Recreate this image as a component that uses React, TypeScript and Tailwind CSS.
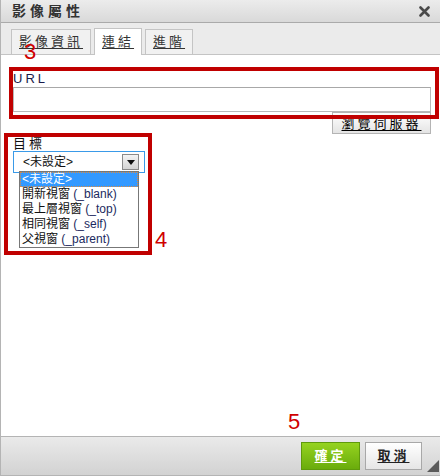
import type React from "react"

const FONT = { fontFamily: '"Liberation Sans", Arial, "Noto Sans CJK TC", sans-serif' }

function Tab({ children, active }: { children: React.ReactNode; active?: boolean }) {
    return (
        <div
            className={`flex items-center justify-center px-[7px] border border-[#c4c4c4] border-b-0 text-[13px] tracking-[3px] text-[#333] underline underline-offset-2 ${
                active ? "bg-white h-[27px] -mb-px" : "bg-[#f1f1f1] h-[25px]"
            }`}
        >
            {children}
        </div>
    )
}

export default function App() {
    const options = [
        { zh: "開新視窗", en: "(_blank)" },
        { zh: "最上層視窗", en: "(_top)" },
        { zh: "相同視窗", en: "(_self)" },
        { zh: "父視窗", en: "(_parent)" },
    ]

    return (
        <div className="w-[440px] h-[476px] flex flex-col bg-white border-l border-[#b4b4b4] relative" style={FONT}>
            {/* title bar */}
            <div className="h-[23px] flex items-center justify-between pl-[11px] pr-[10px] bg-gradient-to-b from-[#ececec] to-[#d9d9d9] border-b border-[#aaaaaa]">
                <span className="text-[14px] font-bold tracking-[4px] text-[#333]">影像屬性</span>
                <svg width="11" height="11" viewBox="0 0 11 11">
                    <path d="M1.5 1.5 L9.5 9.5 M9.5 1.5 L1.5 9.5" stroke="#4a4a4a" strokeWidth="2.6" strokeLinecap="round" />
                </svg>
            </div>

            {/* tabs */}
            <div className="h-[32px] flex items-end gap-[3px] pl-[10px] bg-[#ebebeb] border-b border-[#c4c4c4]">
                <Tab>影像資訊</Tab>
                <Tab active>連結</Tab>
                <Tab>進階</Tab>
            </div>

            {/* body */}
            <div className="flex-1 flex flex-col pl-[12px] pr-[9px] pt-[16px]">
                <div className="text-[13px] tracking-[3px] leading-[16px] text-[#1a1a4a]">URL</div>
                <div className="h-[25px] border border-[#b8b8b8] border-t-[#a8a8a8] bg-white" />
                <div className="flex justify-end">
                    <button className="w-[99px] h-[22px] border border-[#b4b4b4] bg-gradient-to-b from-white to-[#e4e4e4] text-[13px] tracking-[3px] text-black underline underline-offset-2 leading-none">
                        瀏覽伺服器
                    </button>
                </div>
                <div className="mt-[3px] text-[13px] tracking-[3px] leading-[14px] text-[#111]">目標</div>
                <div className="relative w-[132px] h-[22px] border border-[#3a9ae8] bg-white flex items-center pl-[9px]">
                    <span className="text-[12px] text-[#111]">&lt;未設定&gt;</span>
                    <div className="absolute right-[5px] top-[2px] w-[17px] h-[16px] border border-[#8a8a8a] bg-gradient-to-b from-[#f4f4f4] to-[#d4d4d4] flex items-center justify-center">
                        <svg width="8" height="5" viewBox="0 0 8 5">
                            <path d="M0 0 H8 L4 5 Z" fill="#111" />
                        </svg>
                    </div>
                    {/* open list */}
                    <div className="absolute left-[5px] top-[19px] w-[120px] border border-[#777] bg-white z-10 text-[12px] leading-[15px]">
                        <div className="bg-[#3399ff] text-white px-[2px] outline outline-1 outline-dotted outline-[#e08a3a] -outline-offset-1">&lt;未設定&gt;</div>
                        {options.map((o) => (
                            <div key={o.en} className="px-[2px] text-[#111] whitespace-nowrap">
                                {o.zh} <span className="text-[#1c2a60]">{o.en}</span>
                            </div>
                        ))}
                    </div>
                </div>
            </div>

            {/* footer */}
            <div className="h-[40px] flex items-center justify-end gap-[5px] pr-[18px] bg-gradient-to-b from-[#eaeaea] to-[#d2d2d2] border-t border-b border-[#b4b4b4] relative">
                <button className="w-[59px] h-[28px] border border-[#5f9a0c] bg-gradient-to-b from-[#95d31f] to-[#6aac0c] text-white font-bold text-[13px] tracking-[3px] underline underline-offset-2">
                    確定
                </button>
                <button className="w-[57px] h-[28px] border border-[#a8a8a8] bg-gradient-to-b from-white to-[#e6e6e6] text-[#222] font-bold text-[13px] tracking-[3px] underline underline-offset-2">
                    取消
                </button>
                <svg className="absolute right-[1px] bottom-[3px]" width="12" height="12" viewBox="0 0 12 12">
                    <path d="M12 0 V12 H0 Z" fill="#5a5a5a" />
                </svg>
            </div>

            {/* annotations */}
            <div className="absolute left-[8px] top-[67px] w-[430px] h-[52px] border-[4px] border-[#c00000] pointer-events-none" />
            <div className="absolute left-[3px] top-[133px] w-[148px] h-[122px] border-[4px] border-[#c00000] pointer-events-none" />
            <span className="absolute left-[23px] top-[41px] text-[22px] leading-none text-[#d00000]">3</span>
            <span className="absolute left-[154px] top-[229px] text-[22px] leading-none text-[#d00000]">4</span>
            <span className="absolute left-[287px] top-[411px] text-[22px] leading-none text-[#d00000]">5</span>
        </div>
    )
}
